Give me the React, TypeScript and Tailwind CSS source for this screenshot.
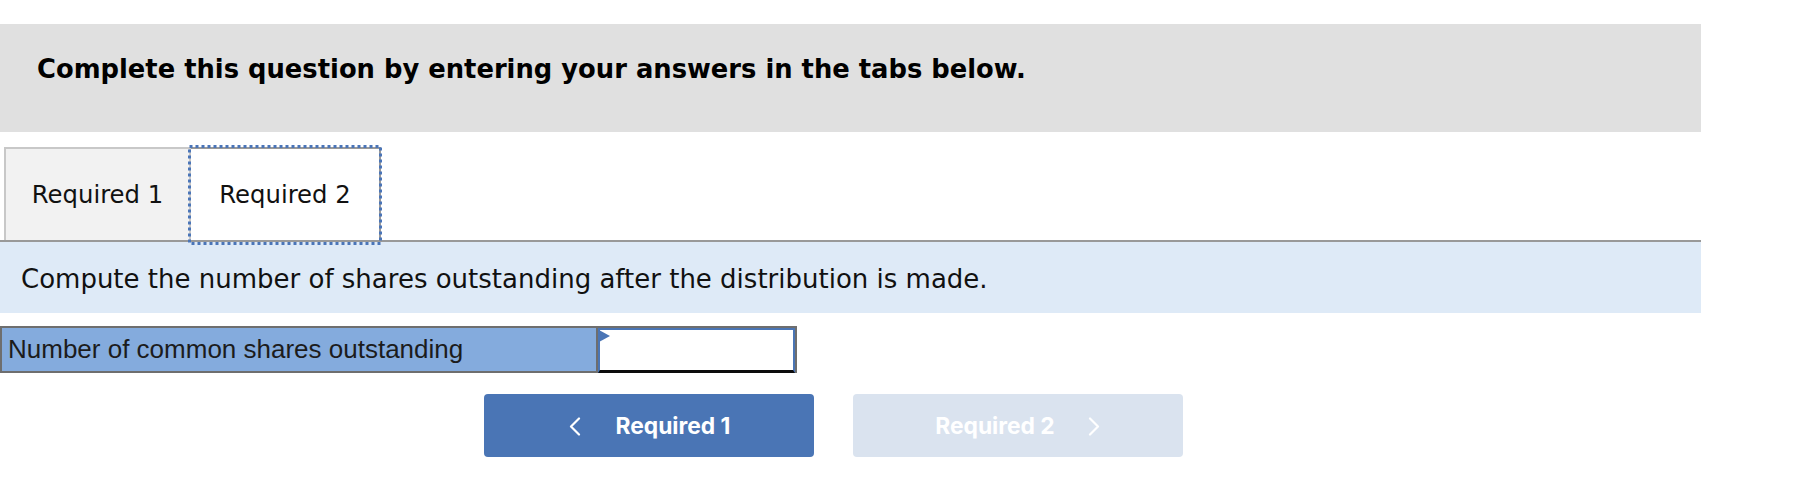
import React from "react";

const body = { fontFamily: "'DejaVu Sans', 'Noto Sans', sans-serif" };

function ChevronLeft() {
  return (
    <svg width="13" height="19" viewBox="0 0 13 19" fill="none">
      <polyline points="11,1.5 3,9.5 11,17.5" stroke="white" strokeWidth="2.2" strokeLinecap="round" strokeLinejoin="round" />
    </svg>
  );
}
function ChevronRight() {
  return (
    <svg width="13" height="19" viewBox="0 0 13 19" fill="none">
      <polyline points="2,1.5 10,9.5 2,17.5" stroke="white" strokeWidth="2.2" strokeLinecap="round" strokeLinejoin="round" />
    </svg>
  );
}

export default function App() {
  return (
    <div className="w-[1806px] h-[486px] bg-white">
      <div className="w-[1701px] pt-[24px]">
        <div className="h-[108px] bg-[#e0e0e0] pl-[37px] pt-[31px]">
          <div
            className="text-[25.8px] leading-[29px] font-bold text-black"
            style={{ fontFamily: "'DejaVu Sans', sans-serif" }}
          >
            Complete this question by entering your answers in the tabs below.
          </div>
        </div>

        <div className="flex items-end pt-[15px] pl-[4px] border-b-2 border-[#999999]">
          <div
            className="w-[187px] h-[93px] flex items-center justify-center pt-[2px] bg-[#f2f2f2] border-t-2 border-l-2 border-r-2 border-[#c8c8c8] text-[24.3px] text-[#111]"
            style={body}
          >
            Required 1
          </div>
          <div
            className="relative w-[190px] h-[93px] flex items-center justify-center pt-[2px] bg-white border-t-2 border-r-2 border-[#999999] text-[24.3px] text-[#111]"
            style={body}
          >
            Required 2
            <svg className="absolute left-[-3px] top-[-4px]" width="194" height="100" viewBox="0 0 194 100">
              <rect x="1.5" y="1.5" width="191" height="97" fill="none" stroke="#4a75b8" strokeWidth="3" strokeDasharray="3 3" />
            </svg>
          </div>
        </div>

        <div className="h-[71px] bg-[#deeaf7] pl-[21px] pt-[3px] flex items-center text-[26px] text-[#111]" style={body}>
          Compute the number of shares outstanding after the distribution is made.
        </div>

        <div className="mt-[13px] flex h-[47px]">
          <div
            className="w-[598px] h-full border-2 border-[#6e6e6e] bg-[#84abdd] pl-[6px] flex items-center text-[26px] text-[#1c1c1c]"
            style={{ fontFamily: "'Liberation Sans', Arial, sans-serif" }}
          >
            Number of common shares outstanding
          </div>
          <div className="w-[199px] h-full border-t-2 border-r-2 border-[#6e6e6e] relative">
            <div className="h-full border-2 border-[#4a75b5] border-b-[3px] bg-white" style={{ borderBottomColor: "#0c0c0c" }}></div>
            <div className="absolute left-[1px] top-[2px] w-0 h-0 border-t-[6px] border-b-[6px] border-l-[11px] border-t-transparent border-b-transparent border-l-[#4a75b5]"></div>
          </div>
        </div>

        <div className="mt-[21px] flex pl-[484px] gap-[39px]" style={{ fontFamily: "Inter, Roboto, 'Liberation Sans', sans-serif" }}>
          <div className="w-[330px] h-[63px] pt-[2px] rounded-[4px] bg-[#4a75b5] flex items-center justify-center gap-[35px] text-white font-bold text-[22.8px]">
            <ChevronLeft />
            <span>Required 1</span>
          </div>
          <div className="w-[330px] h-[63px] pt-[2px] rounded-[4px] bg-[#dae3ef] flex items-center justify-center gap-[33px] text-white font-bold text-[22.8px]">
            <span>Required 2</span>
            <ChevronRight />
          </div>
        </div>
      </div>
    </div>
  );
}
